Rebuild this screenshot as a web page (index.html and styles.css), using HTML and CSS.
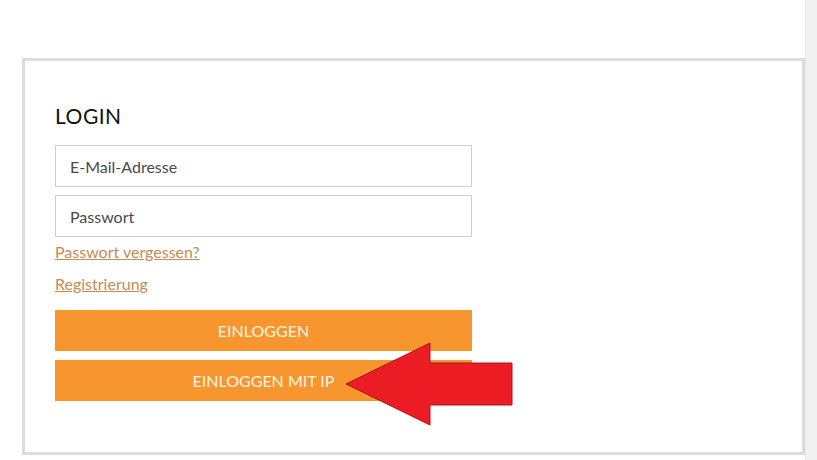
FILE: index.html
```html
<!DOCTYPE html>
<html lang="de">
<head>
    <meta charset="UTF-8">
    <meta name="viewport" content="width=device-width, initial-scale=1.0">
    <title>Login</title>
    <link rel="stylesheet" href="styles.css">
</head>
<body>

    <div class="page">
        <div class="login-box">
            <h1>LOGIN</h1>

            <form class="login-form">
                <input type="email" placeholder="E-Mail-Adresse">
                <input type="password" placeholder="Passwort">

                <a href="#" class="link">Passwort vergessen?</a>
                <a href="#" class="link">Registrierung</a>

                <button type="submit" class="btn">EINLOGGEN</button>
                <div class="btn-wrap">
                    <button type="button" class="btn">EINLOGGEN MIT IP</button>
                    <!-- red arrow pointing at the IP login -->
                    <svg class="arrow" width="170" height="85" viewBox="0 0 170 85">
                        <polygon points="2,42 86,1 86,21 168,21 168,63 86,63 86,83" fill="#ec1c24" stroke="#a8141a" stroke-width="1"/>
                    </svg>
                </div>
            </form>
        </div>
    </div>
    <div class="scrollbar"></div>

</body>
</html>
```

FILE: styles.css
```css
body {
    font-family: 'Lato', 'Open Sans', sans-serif;
    margin: 0;
    padding: 0;
    background: white;
    display: flex;
    height: 460px;
    overflow: hidden;
}
.page {
    flex: 1;
    padding: 58px 0 0 22px;
}
.scrollbar {
    width: 11px;
    background: #f1f1f1;
    border-left: 1px solid #e8e8e8;
}
.login-box {
    height: 391px;
    border: 3px solid #dcdcdc;
    padding: 0 30px;
    background: white;
}
h1 {
    font-size: 21px;
    font-weight: normal;
    letter-spacing: 0.5px;
    color: #111;
    margin: 42px 0 17px 0;
}
.login-form {
    width: 417px;
    display: flex;
    flex-direction: column;
}
input {
    height: 42px;
    box-sizing: border-box;
    border: 1px solid #cfcfcf;
    padding: 0 14px;
    font-family: inherit;
    font-size: 16px;
    margin-bottom: 8px;
    outline: none;
}
input::placeholder {
    color: #4a4a4a;
}
.link {
    color: #c68a52;
    font-size: 16px;
    line-height: 24px;
    margin-bottom: 8px;
    align-self: flex-start;
}
.link:first-of-type {
    margin-top: -5px;
}
.btn {
    height: 41px;
    border: none;
    background: #f7962e;
    color: #fdf4e6;
    font-family: inherit;
    font-size: 16px;
    width: 100%;
    cursor: pointer;
}
.link + .btn {
    margin-top: 6px;
}
.btn-wrap {
    position: relative;
    margin-top: 9px;
}
.arrow {
    position: absolute;
    left: 289px;
    top: -18px;
}
```
